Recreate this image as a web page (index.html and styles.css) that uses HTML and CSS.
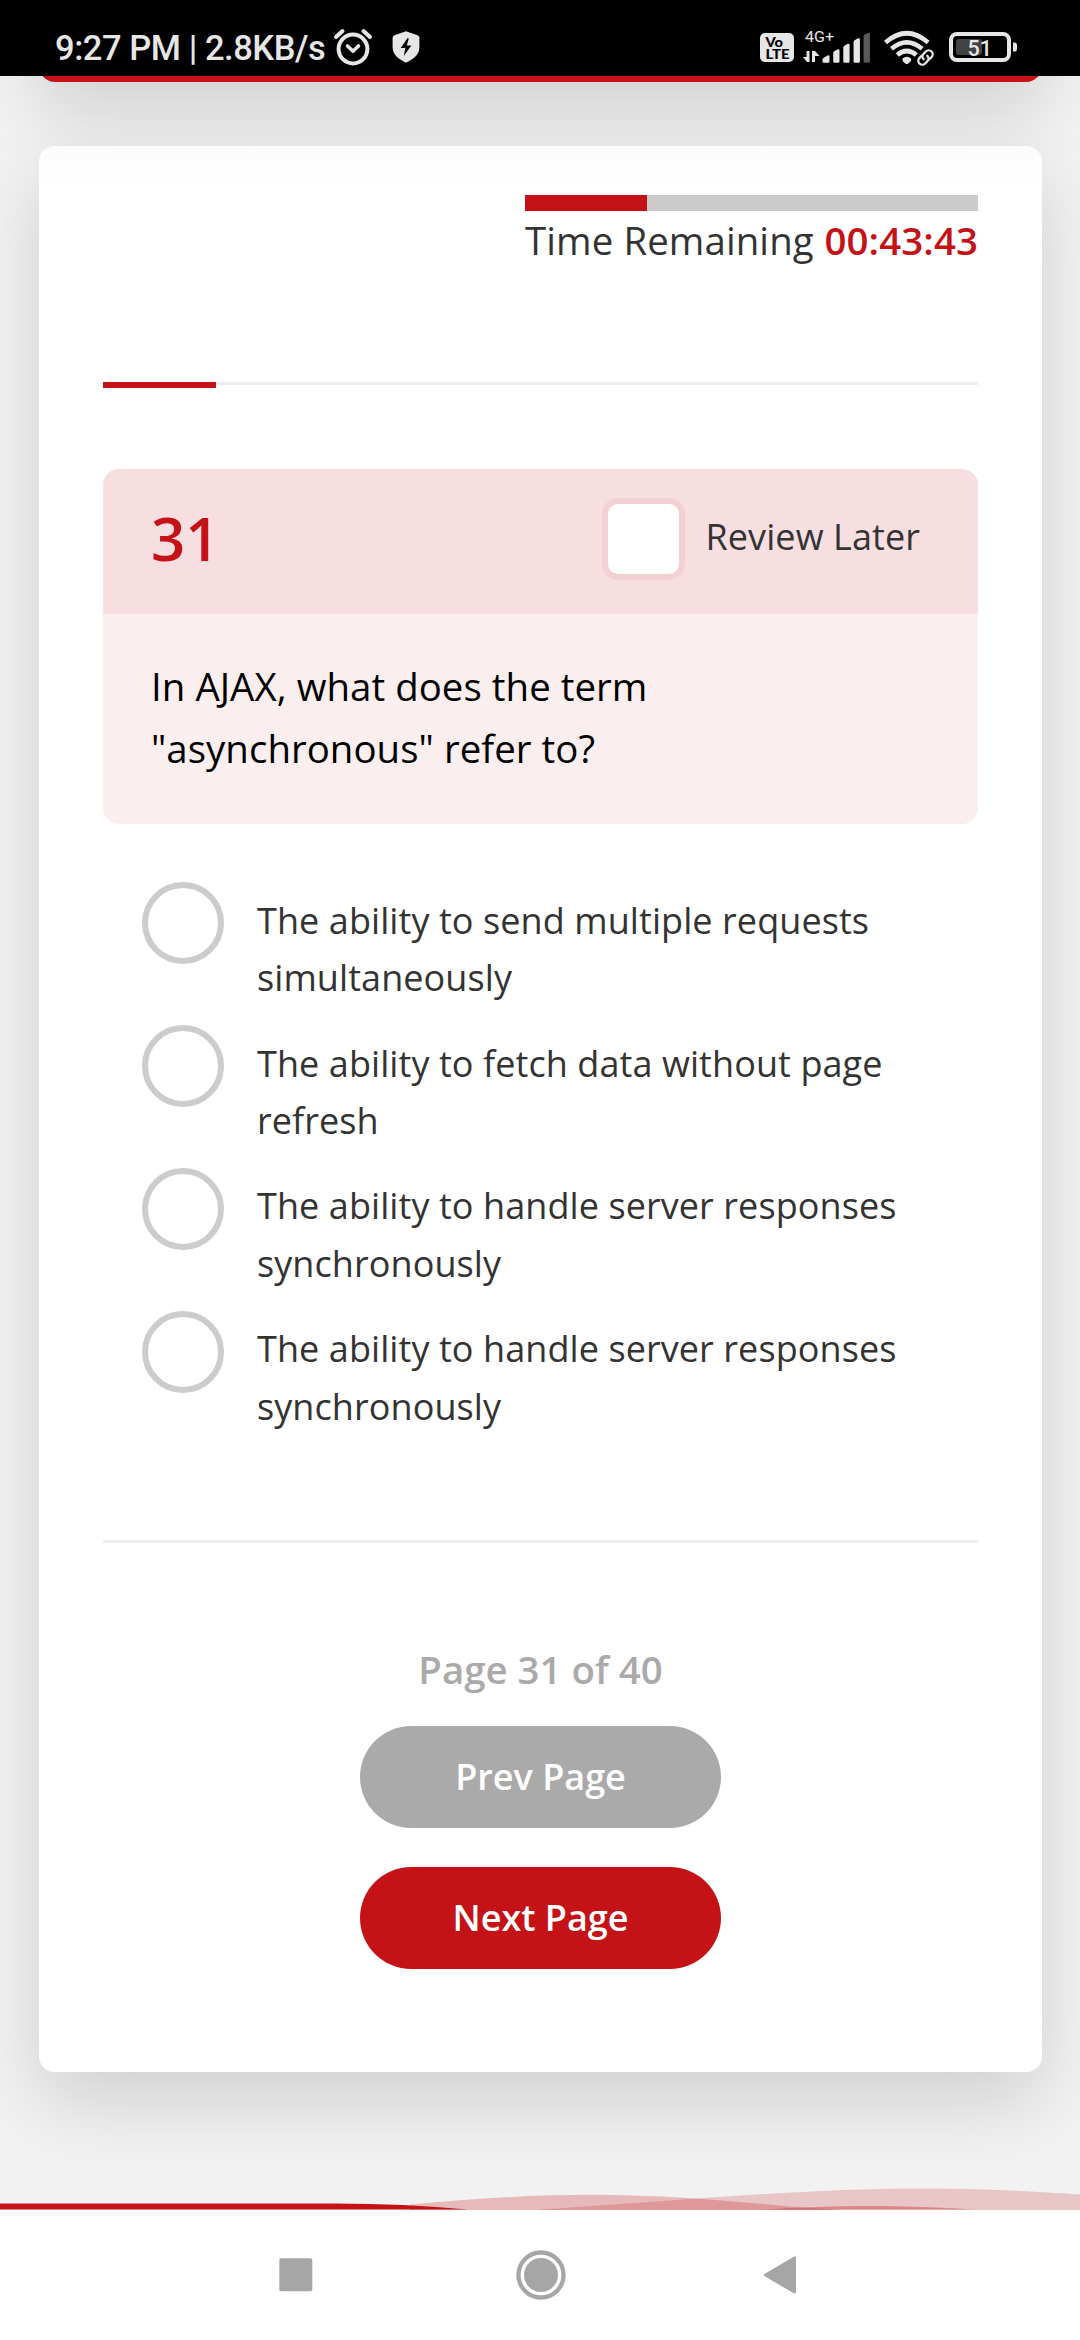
FILE: index.html
```html
<!DOCTYPE html>
<html lang="en">
<head>
<meta charset="utf-8">
<title>Quiz</title>
<link rel="stylesheet" href="styles.css">
</head>
<body>
<header class="status">
  <div class="status-left">
    <span class="clock">9:27 PM | 2.8KB/s</span>
    <svg class="alarm" width="42" height="40" viewBox="0 0 42 40" fill="none" stroke="#e6e6e6" stroke-linecap="round">
      <circle cx="21" cy="21" r="14.4" stroke-width="4"/>
      <path d="M15.5 18l5.5 5.200 5.500-5.200" stroke-width="3.600" stroke-linejoin="round"/>
      <path d="M4 9l6.500-6M38 9l-6.500-6" stroke-width="4"/>
    </svg>
    <svg class="shield" width="28" height="34" viewBox="0 0 28 34">
      <path d="M14 1.200l11.500 4q1.900.8 1.900 2.600V17c0 8-6 12-13.400 15.700C6.600 29 .6 25 .6 17V7.800q0-1.800 1.900-2.600z" fill="#e6e6e6"/>
      <path d="M15.600 8L8.800 18h4.500l-1.500 8 7.500-10.500h-4.500L16.800 8.500z" fill="#000"/>
    </svg>
  </div>
  <svg class="status-right" width="262" height="40" viewBox="758 28 262 40">
    <rect x="760" y="33" width="34" height="29" rx="5" fill="#e6e6e6"/>
    <g class="volte"><text x="765.500" y="46.500" textLength="17.500" lengthAdjust="spacingAndGlyphs">Vo</text><text x="765.500" y="58.700" textLength="24" lengthAdjust="spacingAndGlyphs">LTE</text></g>
    <text class="net" x="805" y="41.700" textLength="29" lengthAdjust="spacingAndGlyphs">4G+</text>
    <g fill="#e6e6e6">
      <path d="M806.500 51h3v11h-2.500l-4-5h3.500zM812 51h3l4.500 5H815v6h-3z"/>
      <path d="M822.500 59.500q0-1 1-1.600l4-2.400q2-1 2 1v5q0 1.300-1.300 1.300h-4.400q-1.300 0-1.300-1.300z"/>
      <path d="M833.200 53q0-1.300 1-1.800l3-1.600q2.300-1 2.300 1v10.900q0 1.300-1.300 1.300h-3.700q-1.300 0-1.300-1.300z"/>
      <path d="M843.300 47.500q0-1.300 1-1.800l3-1.600q2.300-1 2.300 1v16.400q0 1.300-1.300 1.300h-3.700q-1.300 0-1.300-1.300z"/>
      <path d="M853.600 42q0-1.300 1-1.800l3-1.600q2.300-1 2.300 1v21.900q0 1.300-1.300 1.300h-3.700q-1.300 0-1.300-1.300z"/>
      <path d="M863.600 36.500q0-1.300 1-1.800l3-1.600q2.300-1 2.300 1v27.400q0 1.300-1.300 1.300h-3.700q-1.300 0-1.300-1.300z" fill="#5a5a5a"/>
      <path d="M902.500 58.500q4.300-3.500 8.600 0 .6 2-1.200 3.800l-2 1.500q-1 .7-2.200 0l-2-1.500q-1.800-1.800-1.200-3.800z"/>
    </g>
    <g fill="none" stroke="#e6e6e6" stroke-width="4.600">
      <path d="M885.500 42.500q21.300-18.500 42.600 0"/>
      <path d="M891.500 48.800q15.300-13 30.600 0"/>
      <path d="M897.300 55q9.500-8 19 0"/>
    </g>
    <path d="M919.500 63.500l12-12" fill="none" stroke="#000" stroke-width="8"/>
    <g fill="none" stroke="#e6e6e6" stroke-width="2.300" stroke-linecap="round" transform="rotate(-45 925.500 57.500)">
      <path d="M924 53.500h-3a4 4 0 0 0 0 8h3a4 4 0 0 0 4-4M927 61.500h3a4 4 0 0 0 0-8h-3a4 4 0 0 0-4 4"/>
    </g>
    <rect x="951" y="34" width="58" height="26" rx="6" fill="none" stroke="#e6e6e6" stroke-width="4"/>
    <path d="M1013 42.500q4-.5 4 2.500v4q0 3-4 2.500z" fill="#e6e6e6"/>
    <rect x="956" y="39" width="26" height="16" rx="3" fill="#424242"/>
    <text class="level" x="967.500" y="56" textLength="24.500" lengthAdjust="spacingAndGlyphs">51</text>
  </svg>
</header>

<main class="page">
  <div class="banner"></div>
  <section class="card">
    <div class="timer">
      <div class="timer-track"><div class="timer-fill"></div></div>
      <div class="timer-text"><span>Time Remaining</span> <b>00:43:43</b></div>
    </div>
    <div class="progress"><div class="progress-fill"></div></div>
    <article class="question">
      <div class="question-head">
        <span class="number">31</span>
        <label class="review"><span class="checkbox"></span><span>Review Later</span></label>
      </div>
      <p class="question-text">In AJAX, what does the term "asynchronous" refer to?</p>
    </article>
    <ul class="options">
      <li class="option"><span class="radio"></span><span class="answer">The ability to send multiple requests simultaneously</span></li>
      <li class="option"><span class="radio"></span><span class="answer">The ability to fetch data without page refresh</span></li>
      <li class="option"><span class="radio"></span><span class="answer">The ability to handle server responses synchronously</span></li>
      <li class="option"><span class="radio"></span><span class="answer">The ability to handle server responses synchronously</span></li>
    </ul>
    <div class="pager">
      <span class="page-count">Page 31 of 40</span>
      <a class="button prev">Prev Page</a>
      <a class="button next">Next Page</a>
    </div>
  </section>
  <svg class="waves" width="1080" height="24" viewBox="0 0 1080 24" fill="#c41217">
    <path d="M410 18.500C470 13 530 8.800 592 8.800C690 9 770 20 836 23.500V24H410z" opacity=".25"/>
    <path d="M540 23.500C680 15 800 2.500 922 2.500Q1000 2.500 1080 8.500V24H540z" opacity=".2"/>
    <path d="M764 23.500Q870 16.500 974 23.500z" opacity=".35"/>
    <path d="M0 17.500H325Q400 17 468 23.500H0z"/>
  </svg>
</main>

<nav class="navbar">
  <svg width="34" height="34" viewBox="0 0 34 34"><rect x=".3" y=".3" width="33" height="33" rx="2" fill="#a6a6a6"/></svg>
  <svg class="home" width="50" height="50" viewBox="0 0 50 50"><circle cx="25" cy="25" r="22.500" fill="none" stroke="#a6a6a6" stroke-width="4.300"/><circle cx="25" cy="25" r="17" fill="#a6a6a6"/></svg>
  <svg width="32" height="38" viewBox="0 0 32 38"><path d="M1.500 19L30.500 2v34z" fill="#a6a6a6" stroke="#a6a6a6" stroke-width="3" stroke-linejoin="round"/></svg>
</nav>
</body>
</html>
```

FILE: styles.css
```css
* { box-sizing: border-box; }
body {
  margin: 0;
  width: 1080px;
  height: 2340px;
  overflow: hidden;
  display: flex;
  flex-direction: column;
  font-family: "Open Sans", "Noto Sans", sans-serif;
  color: #333;
  background: #f2f2f2;
}
svg { display: block; flex: none; }

.status {
  height: 76px;
  flex: none;
  background: #000;
  color: #e6e6e6;
  display: flex;
  justify-content: space-between;
  padding: 28px 60px 0 55px;
  font-family: Roboto, sans-serif;
}
.status-left { display: flex; align-items: flex-start; }
.clock {
  width: 277px;
  font-size: 34.500px;
  line-height: 40px;
  font-weight: 500;
  letter-spacing: -.45px;
  white-space: nowrap;
}
.shield { margin: 2px 0 0 18px; }
.volte text { font: 900 13px Lato, sans-serif; fill: #000; }
.net { font: 400 15.500px Roboto, sans-serif; fill: #e6e6e6; }
.level { font: 500 22.500px Roboto, sans-serif; fill: #e6e6e6; }

.page {
  flex: 1;
  overflow: hidden;
  display: flex;
  flex-direction: column;
}
.banner, .card {
  margin: 0 38px 0 39px;
  border-radius: 16px;
  box-shadow: 0 30px 75px rgba(0, 0, 0, .14);
  flex: none;
}
.banner { height: 300px; margin-top: -294px; background: #c41217; }
.card {
  height: 1926px;
  margin-top: 64px;
  padding: 49px 64px 0;
  background: linear-gradient(#fcfcfc, #fff 40px);
}
.timer { width: 453px; margin-left: auto; }
.timer-track { height: 16px; background: #ccc; }
.timer-fill { width: 27%; height: 16px; background: #c41217; }
.timer-text {
  display: flex;
  justify-content: space-between;
  font-size: 38.400px;
  line-height: 58px;
  letter-spacing: .1px;
  white-space: nowrap;
}
.timer-text b { font-weight: 600; color: #c41217; }

.progress { height: 3px; margin-top: 113px; background: #eee; }
.progress-fill { width: 113px; height: 6px; background: #c41217; }

.question {
  margin-top: 84px;
  height: 355px;
  border-radius: 16px;
  overflow: hidden;
  background: #faeeee;
}
.question-head {
  height: 145px;
  padding: 0 58px 0 48px;
  display: flex;
  justify-content: space-between;
  background: #f6dee1;
}
.number { font-size: 60px; font-weight: 600; line-height: 139px; color: #c41217; }
.review { display: flex; gap: 21px; font-size: 36px; line-height: 135px; letter-spacing: .08px; }
.checkbox {
  width: 83px;
  height: 82px;
  margin-top: 29px;
  border: 6px solid #f3d1d3;
  border-radius: 16px;
  background: #fff;
}
.question-text {
  margin: 0;
  padding: 41px 200px 0 48px;
  font-size: 38.400px;
  line-height: 62px;
  letter-spacing: .05px;
  color: #000;
}

.options {
  list-style: none;
  margin: 58px 0 0;
  padding: 0 0 0 39px;
  height: 658px;
}
.option { display: flex; gap: 33px; height: 142.900px; }
.radio {
  flex: none;
  width: 82px;
  height: 82px;
  border: 6px solid #ccc;
  border-radius: 50%;
}
.answer { margin-top: 9.700px; font-size: 36px; line-height: 57.600px; letter-spacing: .08px; }

.pager {
  border-top: 3px solid #eee;
  padding-top: 100px;
  display: flex;
  flex-direction: column;
  align-items: center;
}
.page-count { font-size: 38.400px; line-height: 52px; font-weight: 600; color: #aaa; }
.button {
  width: 361px;
  height: 102px;
  margin-top: 31px;
  border-radius: 51px;
  color: #fff;
  font-size: 36px;
  line-height: 101px;
  font-weight: 600;
  text-align: center;
}
.prev { background: #aaa; }
.next { margin-top: 39px; background: #c41217; }
.waves { margin-top: auto; }

.navbar {
  flex: none;
  height: 130px;
  padding: 0 284px 0 279px;
  display: flex;
  justify-content: space-between;
  align-items: center;
  background: #fff;
}
.home { margin-left: 4px; }
```
